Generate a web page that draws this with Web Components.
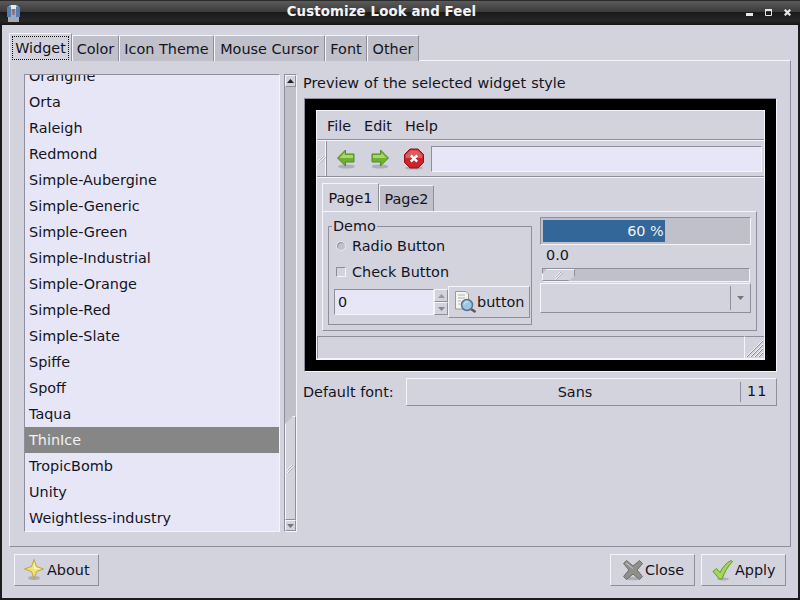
<!DOCTYPE html>
<html><head><meta charset="utf-8"><style>
html,body{margin:0;padding:0;width:800px;height:600px;overflow:hidden;background:#1c1c1c}
body{font:14.4px "DejaVu Sans",sans-serif;color:#14141e}
</style></head><body>
<lnf-window></lnf-window>
<script>
const C={bg:'#d3d3dd',base:'#e6e6f6',lt:'#f4f4fa',dk:'#8e8e9c',tr:'#c0c0ca'};
const common=`*{box-sizing:border-box}svg{display:block;flex:none}
.up{border:1px solid;border-color:${C.lt} ${C.dk} ${C.dk} ${C.lt}}
.in{border:1px solid;border-color:${C.dk} ${C.lt} ${C.lt} ${C.dk}}`;
function def(name,html){
  customElements.define(name,class extends HTMLElement{
    connectedCallback(){
      if(this.shadowRoot)return;
      const s=this.attachShadow({mode:'open'});
      const get=k=>this.getAttribute(k)||'';
      s.innerHTML='<style>'+common+'</style>'+(typeof html==='function'?html(get):html);
    }
  });
}
const ICON={
 back:`<svg width="22" height="22" viewBox="0 0 22 22"><ellipse cx="10.5" cy="18.5" rx="8.5" ry="2" fill="#8a8a90" opacity=".5"/><path d="M1.5 10 9.5 2V6H18V14H9.5V18Z" fill="#6faf33" stroke="#4f8f1e"/><path d="M3.5 10 8.7 4.6V7H17V10Z" fill="#a9d76b"/></svg>`,
 fwd:`<svg width="22" height="22" viewBox="0 0 22 22"><ellipse cx="11" cy="18.5" rx="8.5" ry="2" fill="#8a8a90" opacity=".5"/><path d="M19.5 10 11.5 2V6H3V14H11.5V18Z" fill="#6faf33" stroke="#4f8f1e"/><path d="M4 7H12.3V4.6L17.5 10H4Z" fill="#a9d76b"/></svg>`,
 stop:`<svg width="22" height="22" viewBox="0 0 22 22"><ellipse cx="11" cy="20" rx="9" ry="1.6" fill="#8a8a90" opacity=".5"/><path d="M7 1H15L20.5 6.5V14.5L15 20H7L1.5 14.5V6.5Z" fill="#c9252b" stroke="#8e1216"/><path d="M7.5 2.2H14.5L19.3 7V10H2.7V7Z" fill="#e25a5c"/><path d="M7.8 7.3 14.2 13.7M14.2 7.3 7.8 13.7" stroke="#fff" stroke-width="2.4"/></svg>`,
 star:`<svg width="22" height="24" viewBox="0 0 22 24"><ellipse cx="11" cy="20" rx="6" ry="2" fill="#8a8a90" opacity=".5"/><path d="M11 1.5 13.5 8.5 20.5 11 13.5 13.5 11 20.5 8.5 13.5 1.5 11 8.5 8.5Z" fill="#f2e27a" stroke="#c2a632"/><path d="M11 4 12.6 9.4 18 11H11Z" fill="#fdf7c0"/></svg>`,
 close:`<svg width="22" height="22" viewBox="0 0 22 22"><ellipse cx="11" cy="19.5" rx="8" ry="1.8" fill="#8a8a90" opacity=".5"/><path d="M1.5 4.5 4.5 1.5 11 7 17.5 1.5 20.5 4.5 15 11 20.5 17.5 17.5 20.5 11 15 4.5 20.5 1.5 17.5 7 11Z" fill="#8f8f8c" stroke="#6c6c6a"/><path d="M3.5 4.5 4.6 3.4 11 9 11 10Z" fill="#bdbdb9"/></svg>`,
 apply:`<svg width="22" height="22" viewBox="0 0 22 22"><ellipse cx="11" cy="20" rx="6" ry="1.5" fill="#8a8a90" opacity=".5"/><path d="M1 12.5 4.5 9.5 8 13.5C10.5 8.5 14 4 19 1.5L20.5 2.5C16 7 12.5 13 10 20H7.5Z" fill="#a4d65a" stroke="#5f9a26"/></svg>`,
 find:`<svg width="22" height="22" viewBox="0 0 22 22"><path d="M.5 .5H11L13.5 3V18H.5Z" fill="#f4f4f2" stroke="#9a9a9a"/><path d="M3 4H10M3 7H10M3 10H6M3 13H5" stroke="#b0b0b0"/><path d="M16 18 20.5 21" stroke="#55555a" stroke-width="2.4"/><circle cx="12" cy="14" r="5.5" fill="#9cc6e6" stroke="#5f6f80" stroke-width="1.5"/><path d="M9 13.5a3 3 0 0 1 4-2.5" stroke="#e6f3fb" fill="none"/></svg>`
};
const hatch=`<svg width="10" height="12" viewBox="0 0 10 12"><path d="M1 8 6 3M1 11 8 4" stroke="${C.lt}"/><path d="M2 8 7 3M2 11 9 4" stroke="${C.dk}" opacity=".5"/></svg>`;

def('lnf-titlebar',`<style>
:host{display:flex;height:25px;flex:none;align-items:center;position:relative;border-top:1px solid #2a2a2a;
background:linear-gradient(#5a5a5a 0,#3a3a3a 11px,#1a1a1a 11px,#262626 20px,#141414 24px);color:#f4f4f4}
.ic{margin-left:7px;width:13px;flex:none;margin-top:1px}
.t{flex:1;text-align:center;font:bold 13.33px "DejaVu Sans",sans-serif;letter-spacing:.12px;padding-left:3px;margin-top:-3px}
.b{display:flex;align-items:flex-end;margin-right:3px;margin-top:-2px;height:7px}
.b span{width:19px;display:flex;justify-content:center}
</style>
<div class="ic"><svg width="13" height="17" viewBox="0 0 13 17"><path d="M1 2 3.5 0H9.5L12 2V15H1Z" fill="#8fb0d2"/><path d="M0 2H4V12H0ZM9 2H13V12H9Z" fill="#4f7fb4"/><path d="M4 0H9V4H4Z" fill="#e4ecf4"/><path d="M5 4H8L7.5 10H5.5Z" fill="#a0606e"/><path d="M1 12H12V17H1Z" fill="#a8a8ac"/></svg></div>
<div class="t">Customize Look and Feel</div>
<div class="b"><span><svg width="7" height="3"><rect width="7" height="3" fill="#e8e8e8"/></svg></span><span><svg width="7" height="7"><path d="M.5 1.5H6.5V6.5H.5Z" fill="none" stroke="#e8e8e8"/><rect width="7" height="2" fill="#e8e8e8"/></svg></span><span><svg width="7" height="7"><path d="M.7.7 6.3 6.3M6.3.7.7 6.3" stroke="#e8e8e8" stroke-width="2.2"/></svg></span></div>`);

def('lnf-tab',g=>`<style>
:host{display:block;flex:none}
.tab{height:26px;width:${g('w')}px;background:${C.tr};border:1px solid;border-color:${C.lt} ${C.dk} transparent ${C.lt};border-bottom:0;
display:flex;align-items:center;justify-content:center;white-space:nowrap;padding-top:1px}
.tab.on{height:28px;background:${C.bg};border-right-color:${C.dk};padding-top:0}
.tab.on span{outline:1px dotted #111;outline-offset:0;padding:3px 2px;line-height:16px}
</style><div class="tab ${g('on')?'on':''}"><span><slot></slot></span></div>`);

def('lnf-list',`<style>
:host{display:block;width:256px;height:458px;overflow:hidden;background:${C.base};border:1px solid;border-color:${C.dk} ${C.lt} ${C.lt} ${C.dk};flex:none}
.s{margin-top:-12px}
</style><div class="s"><slot></slot></div>`);
def('lnf-row',`<style>
:host{display:block;height:26px;line-height:26px;padding-left:4px;white-space:nowrap}
:host([sel]){background:#868686;color:#f2f2f2}
</style><slot></slot>`);

const tri=(d,c)=>`<svg width="7" height="4" viewBox="0 0 7 4"><path d="${d==='u'?'M3.5 0 7 4H0Z':'M0 0H7L3.5 4Z'}" fill="${c}"/></svg>`;
def('lnf-vscroll',`<style>
:host{display:flex;flex-direction:column;width:13px;height:458px;flex:none;background:${C.tr};border:1px solid;border-color:${C.dk} ${C.lt} ${C.lt} ${C.dk}}
.st{height:12px;flex:none;display:flex;align-items:center;justify-content:center;background:${C.bg}}
.st.d{height:11px}
.sp{flex:1}
.th{height:104px;flex:none;background:${C.bg};display:flex;align-items:center;justify-content:center;clip-path:polygon(8px 0,100% 0,100% 100%,0 100%,0 8px)}
</style><div class="st up">${tri('u','#222')}</div><div class="sp"></div><div class="th up">${hatch}</div><div class="st d up">${tri('d','#777')}</div>`);

def('lnf-button',g=>`<style>
:host{display:block;flex:none}
.b{height:32px;width:85px;display:flex;align-items:center;gap:${g('gap')||1}px;padding-left:${g('pad')||7}px;background:${C.bg};border:1px solid;border-color:${C.lt} ${C.dk} ${C.dk} ${C.lt}}
</style><div class="b">${ICON[g('icon')]}<slot></slot></div>`);

def('lnf-demo',`<style>
:host{display:block;width:435px;height:120px;flex:none;background:${C.bg};border:1px solid;border-color:${C.lt} ${C.dk} ${C.dk} ${C.lt};padding:14px 5px 0 5px}
.g{display:flex}
.frame{width:204px;height:99px;border:1px solid ${C.dk};position:relative;padding:6px 5px 0 5px}
.lg{position:absolute;left:3px;top:-10px;background:${C.bg};padding:0 1px;line-height:18px}
.opt{height:26px;display:flex;align-items:center;gap:6px;margin-left:2px}
.rd{width:10px;height:10px;border-radius:50%;background:#c0c0ca;border:1px solid #e8e8f0;box-shadow:inset 1px 1px 0 #8e8e9c}
.ck{width:10px;height:10px;border:1px solid;border-color:${C.dk} ${C.lt} ${C.lt} ${C.dk}}
.spin{display:flex;align-items:center;margin-top:1px;height:32px}
.ent{width:100px;height:26px;background:${C.base};line-height:24px;padding-left:3px;flex:none}
.ar{width:14px;height:26px;flex:none;display:flex;flex-direction:column}
.ar div{flex:1;display:flex;align-items:center;justify-content:center;background:${C.bg}}
.btn{width:82px;height:32px;display:flex;align-items:center;padding-left:6px;flex:none}
.r{width:212px;margin-left:8px;margin-top:-9px}
.pb{height:28px;padding:2px;background:${C.tr};position:relative}
.pb i{display:block;height:100%;width:122px;background:#336699}
.pb span{position:absolute;left:0;right:0;top:0;line-height:26px;text-align:center;color:#f2f2f2}
.val{height:23px;line-height:21px;padding-left:6px}
.tr{height:14px;width:208px;margin-left:2px;background:${C.tr}}
.sl{width:33px;height:12px;margin-left:-1px;background:${C.bg};display:flex;align-items:center;justify-content:center;clip-path:polygon(5px 0,100% 0,100% 7px,26px 100%,0 100%,0 5px)}
.cb{height:30px;margin-top:1px;display:flex;align-items:center;justify-content:flex-end;padding:2px 0}
.cb b{display:block;width:1px;height:100%;background:${C.dk};margin-right:2px}
.cb span{width:14px;display:flex;justify-content:center;margin-right:3px}
</style><div class="g"><div class="frame"><div class="lg">Demo</div>
<div class="opt"><div class="rd"></div>Radio Button</div>
<div class="opt"><div class="ck"></div>Check Button</div>
<div class="spin"><div class="ent in">0</div><div class="ar"><div class="up">${tri('u','#999')}</div><div class="up">${tri('d','#888')}</div></div><div class="btn up">${ICON.find}<span>button</span></div></div>
</div>
<div class="r"><div class="pb in"><i></i><span>60 %</span></div><div class="val">0.0</div><div class="tr in"><div class="sl up">${hatch}</div></div><div class="cb up"><b></b><span>${tri('d','#777')}</span></div></div></div>`);

def('lnf-subtab',g=>`<style>
:host{display:block;flex:none}
.t{width:${g('w')}px;height:26px;background:${C.tr};border:1px solid;border-color:${C.lt} ${C.dk} transparent ${C.lt};border-bottom:0;display:flex;align-items:center;justify-content:center;margin-top:2px}
.on{height:28px;margin-top:0;background:${C.bg}}
</style><div class="t ${g('on')?'on':''}"><slot></slot></div>`);

def('lnf-preview',`<style>
:host{display:block;width:473px;height:274px;margin-left:1px;background:#000;border:1px solid;border-color:${C.dk} ${C.lt} ${C.lt} ${C.dk};padding:11px;flex:none}
.w{height:250px;background:${C.bg};border:1px solid ${C.lt};display:flex;flex-direction:column}
.m{height:29px;display:flex;align-items:center;gap:13px;padding:2px 0 0 10px;border-bottom:1px solid ${C.dk};flex:none}
.tb{height:37px;display:flex;align-items:center;border-top:1px solid ${C.lt};border-bottom:1px solid ${C.dk};flex:none}
.gr{width:10px;height:100%;border-right:1px solid ${C.dk};display:flex;align-items:center;justify-content:center;flex:none;box-shadow:inset -1px 0 0 ${C.lt}}
.ti{display:flex;width:33.5px;flex:none;justify-content:center}
.en{width:331px;height:26px;background:${C.base};margin-left:.5px;flex:none}
.nb{flex:none;padding:5px 0 0 5px;border-top:1px solid ${C.lt}}
.tabs{display:flex}
.st{flex:1;margin-top:5px;display:flex;align-items:stretch}
.st .box{flex:1;background:${C.bg};border-top:1px solid ${C.dk};border-left:1px solid ${C.dk};border-bottom:1px solid ${C.lt}}
.st .rz{width:19px;flex:none;border-top:1px solid ${C.dk};border-bottom:1px solid ${C.lt};display:flex;align-items:flex-end;justify-content:flex-end}
</style><div class="w"><div class="m"><span>File</span><span>Edit</span><span>Help</span></div>
<div class="tb"><div class="gr">${hatch}</div><div style="width:3px;flex:none"></div><div class="ti">${ICON.back}</div><div class="ti">${ICON.fwd}</div><div class="ti">${ICON.stop}</div><div class="en in"></div></div>
<div class="nb"><div class="tabs"><lnf-subtab w="57" on="1">Page1</lnf-subtab><lnf-subtab w="55">Page2</lnf-subtab></div><lnf-demo></lnf-demo></div>
<div class="st"><div class="box in"></div><div class="rz"><svg width="19" height="19" viewBox="0 0 19 19"><path d="M1 18 18 1M5 18 18 5M9 18 18 9M13 18 18 13" stroke="${C.lt}"/><path d="M2 18 18 2M6 18 18 6M10 18 18 10M14 18 18 14" stroke="${C.dk}"/></svg></div></div></div>`);

def('lnf-fontrow',`<style>
:host{display:flex;align-items:center;height:28px;margin-top:6px;flex:none}
.l{width:103px;white-space:nowrap}
.b{width:371px;height:28px;display:flex;align-items:center;background:${C.bg}}
.n{flex:1;text-align:center;padding-left:3px}
.s{width:36px;height:20px;border-left:1px solid ${C.dk};padding-left:6px;line-height:19px;letter-spacing:1px}
</style><div class="l">Default font:</div><div class="b up"><div class="n">Sans</div><div class="s">11</div></div>`);

def('lnf-window',`<style>
:host{display:flex;flex-direction:column;width:800px;height:600px;background:#1c1c1c}
.c{flex:1;margin:0 2px 2px;background:${C.bg};padding:8px 7px 0 7px;display:flex;flex-direction:column}
.tabs{display:flex;align-items:flex-end;flex:none;height:28px;position:relative;z-index:1;margin-bottom:-1px}
.panel{height:487px;width:782px;border:1px solid;border-color:${C.lt} ${C.dk} ${C.dk} ${C.lt};padding:13px 13px 13px 14px;display:flex;flex:none}
.rt{margin-left:6px;flex:1;display:flex;flex-direction:column;min-width:0}
.cap{height:17px;line-height:17px;margin:1px 0 6px;white-space:nowrap;flex:none;word-spacing:.5px}
.bot{display:flex;align-items:center;padding:7px 5px 0 5px;gap:6px}
.sp{flex:1}
</style><lnf-titlebar></lnf-titlebar><div class="c">
<div class="tabs"><lnf-tab w="63" on="1">Widget</lnf-tab><lnf-tab w="47">Color</lnf-tab><lnf-tab w="95">Icon Theme</lnf-tab><lnf-tab w="111">Mouse Cursor</lnf-tab><lnf-tab w="42">Font</lnf-tab><lnf-tab w="52">Other</lnf-tab></div>
<div class="panel"><lnf-list>
${['Orangine','Orta','Raleigh','Redmond','Simple-Aubergine','Simple-Generic','Simple-Green','Simple-Industrial','Simple-Orange','Simple-Red','Simple-Slate','Spiffe','Spoff','Taqua','ThinIce','TropicBomb','Unity','Weightless-industry'].map(n=>`<lnf-row${n==='ThinIce'?' sel':''}>${n}</lnf-row>`).join('')}
</lnf-list><div style="width:4px;flex:none"></div><lnf-vscroll></lnf-vscroll>
<div class="rt"><div class="cap">Preview of the selected widget style</div><lnf-preview></lnf-preview><lnf-fontrow></lnf-fontrow></div></div>
<div class="bot"><lnf-button icon="star" pad="8" gap="2">About</lnf-button><div class="sp"></div><lnf-button icon="close" pad="11">Close</lnf-button><lnf-button icon="apply" pad="10">Apply</lnf-button></div>
</div>`);
</script></body></html>
